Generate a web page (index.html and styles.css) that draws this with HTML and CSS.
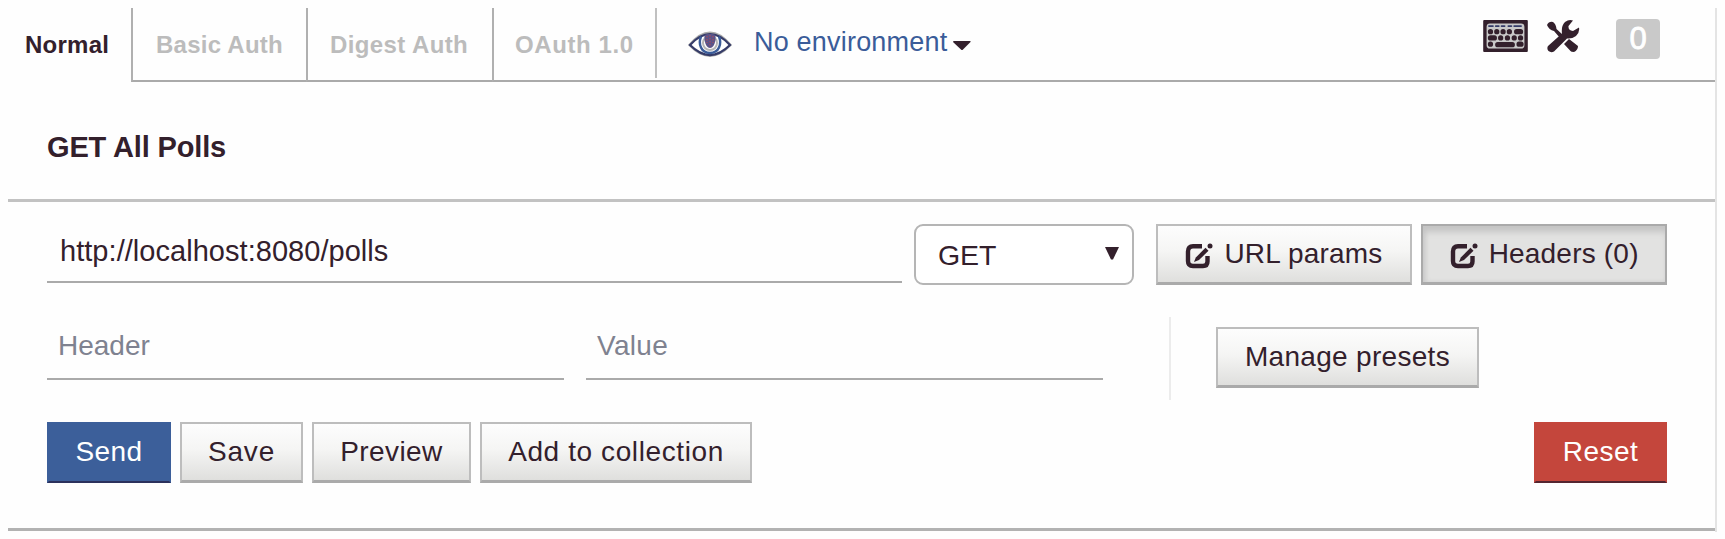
FILE: index.html
```html
<!DOCTYPE html>
<html lang="en">
<head>
<meta charset="utf-8">
<title>Request builder</title>
<link rel="stylesheet" href="styles.css">
</head>
<body>
<svg class="defs" width="0" height="0" aria-hidden="true">
  <symbol id="edit" viewBox="0 0 28 26">
    <path d="M17 3.200H8Q3 3.200 3 8.500V18Q3 23 8 23H18Q22.500 23 22.500 18.500V13" fill="none" stroke="#33202c" stroke-width="4.400"/>
    <path d="M9 19L10.800 14.500L20.500 4.800L23.500 7.800L14 17Z" fill="#33202c"/>
    <circle cx="25" cy="2.900" r="2.500" fill="#33202c"/>
  </symbol>
</svg>
<main class="panel">
  <header class="topbar">
    <nav class="tabs">
      <a class="tab active">Normal</a>
      <a class="tab basic">Basic Auth</a>
      <a class="tab digest">Digest Auth</a>
      <a class="tab oauth">OAuth 1.0</a>
    </nav>
    <div class="tools">
      <svg class="eye" width="44" height="26" viewBox="0 0 44 26">
        <path d="M2 14Q22-10 42 14Q22 35 2 14Z" fill="#fff" stroke="#aaa" stroke-width="3"/>
        <path d="M2 14Q22-8 42 14Q22 34 2 14Z" fill="#fff" stroke="#353b68" stroke-width="2.200"/>
        <path d="M13 5.500C10 13 13 22 22 22S34 13 31 5.500" fill="none" stroke="#3a5c99" stroke-width="2.500"/>
        <circle cx="22" cy="12" r="7" fill="none" stroke="#b5b5b5" stroke-width="2"/>
        <path d="M16.500 4Q22 1.500 27.500 4V9Q26 17 22 17T16.500 9Z" fill="#5a5488"/>
        <path d="M19 5V12M22 4V16M25 5V12" stroke="#b94a55" stroke-width="1" stroke-dasharray="1.500 1.500"/>
      </svg>
      <a class="env">No environment</a>
      <svg class="caret" width="18" height="9" viewBox="0 0 18 9"><path d="M0 1Q0 0 1 0H17Q18 0 17.500 1L9.500 9H8.500Z" fill="#33202c"/></svg>
      <svg class="keyboard" width="45" height="32" viewBox="0 0 46 33">
        <rect width="46" height="33" rx="1" fill="#33202c"/>
        <rect x="4.500" y="4.500" width="37" height="24" rx="2.500" fill="#c9c9c9" stroke="#c9c9c9" stroke-width="2"/>
        <g stroke="#33202c" stroke-linecap="round" stroke-width="5.400">
          <path d="M7.500 12h.01M14 12h.01M20.500 12h.01M27 12h.01M34.500 12h4M7.500 18.500h4M18 18.500h.01M25 18.500h.01M32 18.500h.01M38.500 18.500h.01M7.500 25h.01M15 25.500H30M37 25h2"/>
          <path d="M6 6.300h4M13 6.300h3M19 6.300h3M26 6.300h3M32 6.300h7" stroke="#353b68" stroke-width="2"/>
        </g>
      </svg>
      <svg class="wrench" width="33" height="33" viewBox="0 0 33 33" fill="#33202c">
        <path d="M0 5Q2 1 6 2Q9 4 9.500 9L16 15L13 18L7 11Q2 10 0 5Z"/>
        <path d="M22 19L31 26Q31 30 27 32Q24 32 23.500 31L17 24Z"/>
        <path d="M1 26L15 13.500Q14 6 18 2Q22-1 26 .5L21.500 6Q21 11 26 11L32 7.500Q33 12 29 16Q25 19 20 18.500L7 31.500Q4 33 1.500 31Q-.5 28.500 1 26Z"/>
      </svg>
      <span class="badge">0</span>
    </div>
  </header>
  <h1 class="title">GET All Polls</h1>
  <section class="request">
    <div class="row url-row">
      <div class="field url">http://localhost:8080/polls</div>
      <div class="select"><span>GET</span><svg width="14" height="13" viewBox="0 0 14 13"><path d="M0 0H14L8 12.500H6Z" fill="#33202c"/></svg></div>
      <button class="btn params"><svg width="28" height="26"><use href="#edit"/></svg><span>URL params</span></button>
      <button class="btn headers pressed"><svg width="28" height="26"><use href="#edit"/></svg><span>Headers (0)</span></button>
    </div>
    <div class="row header-row">
      <div class="field empty">Header</div>
      <div class="field empty">Value</div>
      <div class="presets"><button class="btn manage">Manage presets</button></div>
    </div>
    <div class="row actions">
      <button class="btn send">Send</button>
      <button class="btn save">Save</button>
      <button class="btn preview">Preview</button>
      <button class="btn add">Add to collection</button>
      <button class="btn reset">Reset</button>
    </div>
  </section>
</main>
</body>
</html>
```
FILE: styles.css
```css
* { box-sizing: border-box; }
body {
  margin: 0;
  background: #fefefe;
  color: #33202c;
  font: 28px/32px "Liberation Sans", Arial, sans-serif;
  white-space: nowrap;
}
.defs { display: block; height: 0; }
.panel {
  width: 1709px;
  height: 524px;
  margin: 8px 0 0 8px;
  border-right: 2px solid #e4e4e4;
}
.topbar { display: flex; height: 74px; }
.tabs { display: flex; }
.tab {
  height: 74px;
  padding-left: 23px;
  border-left: 2px solid #b0b0b0;
  border-bottom: 2px solid #aaa;
  color: #bcbcbc;
  font-size: 24px;
  font-weight: bold;
  line-height: 74px;
  letter-spacing: .25px;
}
.tab.active { width: 123px; padding-left: 17px; border: 0; color: #33202c; }
.basic { width: 175px; }
.digest { width: 186px; padding-left: 22px; letter-spacing: .4px; }
.oauth { width: 163px; padding-left: 21px; letter-spacing: .6px; }
.tools {
  position: relative;
  display: flex;
  flex: 1;
  align-items: flex-start;
  border-bottom: 2px solid #aaa;
}
.tools::before { content: ""; width: 2px; height: 70px; background: #c0c0c0; }
.eye { margin: 23px 0 0 31px; }
.env { width: 194px; margin: 18px 0 0 22px; color: #3a5c99; font-size: 27px; letter-spacing: .2px; }
.caret { margin: 33px 0 0 5px; }
.keyboard { margin: 12px 0 0 512px; }
.wrench { margin: 12px 0 0 19px; }
.badge {
  width: 44px;
  height: 40px;
  margin: 11px 0 0 36px;
  border-radius: 4px;
  background: #c9c9c9;
  color: #fff;
  font-size: 31px;
  -webkit-text-stroke: .8px #fff;
  line-height: 40px;
  text-align: center;
}
.title {
  height: 120px;
  margin: 0;
  padding: 49px 0 0 39px;
  border-bottom: 3px solid #c2c2c2;
  font-size: 29px;
  line-height: 32px;
  letter-spacing: -.15px;
}
.request {
  height: 329px;
  padding: 22px 48px 0 39px;
  border-bottom: 3px solid #b2b2b2;
}
.row { display: flex; }
.field {
  height: 59px;
  padding: 11px 13px 0;
  border-bottom: 2px solid #aaa;
}
.url { width: 856px; font-size: 29px; letter-spacing: .04px; }
.select {
  display: flex;
  align-items: center;
  justify-content: space-between;
  width: 220px;
  height: 61px;
  margin-left: 12px;
  padding: 0 13px 0 22px;
  border: 2px solid #b5b5b5;
  border-radius: 9px;
  background: #fff;
  font-size: 28.5px;
}
.select svg { margin-top: -2px; }
.btn {
  display: flex;
  justify-content: center;
  height: 61px;
  padding: 12px 0 0;
  border: 2px solid #bdbdbd;
  border-bottom: 3px solid #aaa;
  border-radius: 0;
  background: linear-gradient(#fdfdfd, #f5f5f4 45%, #dfdfdd);
  color: #33202c;
  font: 28px/32px "Liberation Sans", Arial, sans-serif;
  letter-spacing: .2px;
  white-space: nowrap;
}
.btn svg { margin: 5px 11px 0 0; }
.params { width: 257px; margin-left: 22px; }
.headers { width: 246px; margin-left: 9px; }
.pressed {
  border-color: #aaa;
  background: #e2e2e1;
  box-shadow: inset 0 8px 6px -2px #c4c4c4, inset 3px 0 4px #ccc;
}
.header-row { margin-top: 32px; }
.header-row .field { width: 517px; height: 63px; padding: 13px 11px 0; color: #7f8290; }
.header-row .field + .field { margin-left: 22px; letter-spacing: .3px; }
.presets {
  height: 83px;
  margin-left: 66px;
  padding: 10px 0 0 45px;
  border-left: 2px solid #ececec;
}
.manage { width: 263px; letter-spacing: .3px; }
.actions { margin-top: 22px; }
.send { width: 124px; margin-right: 9px; letter-spacing: .4px; }
.save { width: 123px; margin-right: 9px; letter-spacing: .8px; }
.preview { width: 159px; margin-right: 9px; letter-spacing: .4px; }
.add { width: 272px; letter-spacing: .6px; }
.send, .reset { border-bottom-width: 2px; color: #fff; }
.send { border-color: #3c5f9a #3c5f9a #2b315c; background: #3c5f9a; }
.reset { width: 133px; margin-left: auto; border-color: #c4463c #c4463c #542530; background: #c4463c; letter-spacing: .5px; }
```
